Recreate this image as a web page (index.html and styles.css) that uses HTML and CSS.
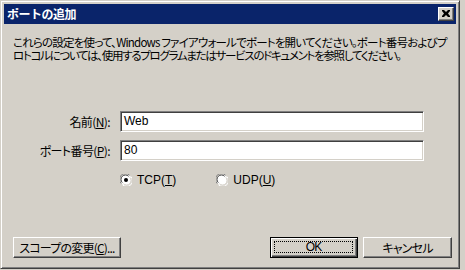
FILE: index.html
```html
<!DOCTYPE html>
<html lang="ja">
<head>
<meta charset="utf-8">
<title>ポートの追加</title>
<link rel="stylesheet" href="styles.css">
</head>
<body>
<div class="window">
  <div class="titlebar">
    <span class="title">ポートの追加</span>
    <span class="close"><svg width="8" height="7" viewBox="0 0 8 7"><path d="M0 0h2l2 2 2-2h2v1L6 3.5 8 6v1H6L4 5 2 7H0V6l2-2.5L0 1z" fill="#000"/></svg></span>
  </div>
  <div class="body">
    <div class="desc">
      <div class="line l1">これらの設定を使って、Windows ファイアウォールでポートを開いてください。ポート番号およびプ</div>
      <div class="line l2">ロトコルについては、使用するプログラムまたはサービスのドキュメントを参照してください。</div>
    </div>
    <div class="form">
      <label class="lbl">名前(<u>N</u>):</label>
      <div class="field">Web</div>
      <label class="lbl">ポート番号(<u>P</u>):</label>
      <div class="field">80</div>
    </div>
    <div class="radios">
      <span class="radio">
        <svg width="12" height="12" viewBox="0 0 12 12"><circle cx="6" cy="6" r="5.5" fill="#fff"/><path d="M1.2 9.5A5.5 5.5 0 0 1 9.5 1.2" stroke="#808080" stroke-width="1" fill="none"/><path d="M2.3 8.6A4.4 4.4 0 0 1 8.6 2.3" stroke="#404040" stroke-width="1" fill="none"/><path d="M10.8 2.5A5.5 5.5 0 0 1 2.5 10.8" stroke="#fff" stroke-width="1" fill="none"/><path d="M9.7 3.4A4.4 4.4 0 0 1 3.4 9.7" stroke="#d4d0c8" stroke-width="1" fill="none"/><circle cx="6" cy="6" r="2" fill="#000"/></svg>
        <span>TCP(<u>T</u>)</span>
      </span>
      <span class="radio udp">
        <svg width="12" height="12" viewBox="0 0 12 12"><circle cx="6" cy="6" r="5.5" fill="#fff"/><path d="M1.2 9.5A5.5 5.5 0 0 1 9.5 1.2" stroke="#808080" stroke-width="1" fill="none"/><path d="M2.3 8.6A4.4 4.4 0 0 1 8.6 2.3" stroke="#404040" stroke-width="1" fill="none"/><path d="M10.8 2.5A5.5 5.5 0 0 1 2.5 10.8" stroke="#fff" stroke-width="1" fill="none"/><path d="M9.7 3.4A4.4 4.4 0 0 1 3.4 9.7" stroke="#d4d0c8" stroke-width="1" fill="none"/></svg>
        <span>UDP(<u>U</u>)</span>
      </span>
    </div>
    <div class="footer">
      <button class="btn scope">スコープの変更(<u>C</u>)...</button>
      <button class="btn default"><span class="focus">OK</span></button>
      <button class="btn cancel">キャンセル</button>
    </div>
  </div>
</div>
</body>
</html>
```
FILE: styles.css
```css
html, body {
  margin: 0;
  padding: 0;
  background: #d4d0c8;
}
body {
  font-family: "Noto Sans CJK JP", "Liberation Sans", sans-serif;
  font-size: 12px;
  color: #000;
}
.window {
  box-sizing: border-box;
  width: 460px;
  height: 269px;
  background: #d4d0c8;
  border: 1px solid;
  border-color: #d4d0c8 #404040 #404040 #d4d0c8;
  box-shadow: inset 1px 1px #fff, inset -1px -1px #808080;
  padding: 3px;
  display: flex;
  flex-direction: column;
}
.titlebar {
  height: 20px;
  background: #0a246a;
  display: flex;
  align-items: center;
  padding: 0 2px 0 3px;
}
.title {
  color: #fff;
  font-weight: bold;
  font-size: 12px;
  letter-spacing: -0.5px;
  line-height: 14px;
}
.close {
  margin-left: auto;
  box-sizing: border-box;
  width: 16px;
  height: 14px;
  background: #d4d0c8;
  border: 1px solid;
  border-color: #fff #404040 #404040 #fff;
  box-shadow: inset -1px -1px #808080;
  display: flex;
  align-items: center;
  justify-content: center;
  padding: 0 1px 1px 0;
}
.close svg { display: block; }
.body {
  flex: 1;
  display: flex;
  flex-direction: column;
}
.desc {
  margin: 12px 0 0 9px;
  display: flex;
  flex-direction: column;
}
.line {
  height: 13px;
  line-height: 13px;
  font-size: 11.5px;
  font-feature-settings: "palt";
  white-space: nowrap;
}
.l1 { letter-spacing: -0.8px; }
.l2 { letter-spacing: -1.3px; }
.form {
  margin-top: 49px;
  display: grid;
  grid-template-columns: 106px 304px;
  column-gap: 10px;
  row-gap: 8px;
  align-items: center;
}
.lbl {
  text-align: right;
  letter-spacing: -0.6px;
  font-feature-settings: "palt";
}
.field {
  box-sizing: border-box;
  height: 21px;
  background: #fff;
  border: 1px solid;
  border-color: #808080 #fff #fff #808080;
  box-shadow: inset 1px 1px #404040, inset -1px -1px #d4d0c8;
  padding: 0 3px;
  line-height: 19px;
  font-family: "Liberation Sans", sans-serif;
  font-size: 12px;
}
.radios {
  margin-top: 13px;
  padding-left: 116px;
  display: flex;
  align-items: center;
  height: 12px;
}
.radio {
  display: flex;
  align-items: center;
  gap: 5px;
  font-family: "Liberation Sans", sans-serif;
}
.radio svg { display: block; }
.udp { margin-left: 40px; }
.footer {
  margin-top: 51px;
  display: flex;
  padding: 0 4px 0 9px;
}
.btn {
  box-sizing: border-box;
  height: 21px;
  background: #d4d0c8;
  border: 1px solid;
  border-color: #fff #404040 #404040 #fff;
  box-shadow: inset -1px -1px #808080;
  font-family: "Noto Sans CJK JP", "Liberation Sans", sans-serif;
  font-size: 12px;
  letter-spacing: -0.8px;
  font-feature-settings: "palt";
  color: #000;
  padding: 0;
  display: flex;
  align-items: center;
  justify-content: center;
  line-height: 14px;
}
.scope { width: 108px; }
.default {
  width: 88px;
  margin-left: auto;
  border: 1px solid #000;
  box-shadow: inset 1px 1px #fff, inset -1px -1px #404040, inset -2px -2px #808080;
  padding: 3px 4px 4px 3px;
}
.focus {
  flex: 1;
  align-self: stretch;
  border: 1px dotted #000;
  display: flex;
  align-items: center;
  justify-content: center;
  font-family: "Liberation Sans", sans-serif;
}
.cancel {
  width: 89px;
  margin-left: 5px;
}
```
